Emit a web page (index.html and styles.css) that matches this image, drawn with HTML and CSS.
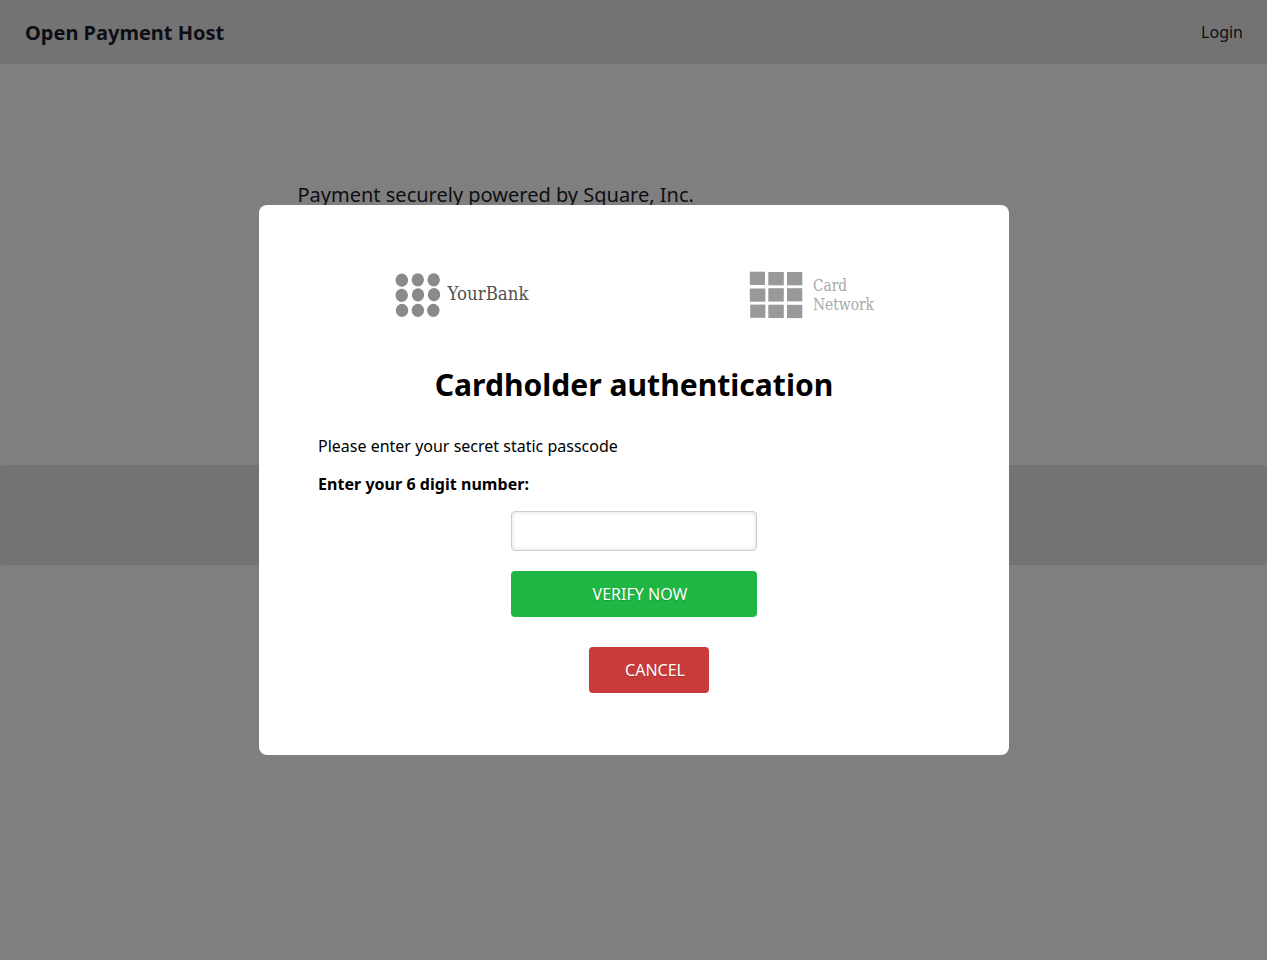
FILE: index.html
```html
<!DOCTYPE html>
<html lang="en">
<head>
<meta charset="utf-8">
<title>Open Payment Host</title>
<link rel="stylesheet" href="styles.css">
</head>
<body>
<header class="navbar">
  <a class="brand">Open Payment Host</a>
  <a class="login">Login</a>
</header>
<main class="page">
  <p class="powered">Payment securely powered by Square, Inc.</p>
</main>
<footer class="footer"></footer>
<div class="overlay">
  <section class="dialog">
    <div class="logos">
      <svg class="logo" width="150" height="60" viewBox="0 0 150 60" fill="#8a8a8a">
        <g>
          <ellipse cx="11.8" cy="15.2" rx="6.2" ry="6.6"/><ellipse cx="27.8" cy="14.8" rx="6.2" ry="6.6"/><ellipse cx="43.7" cy="14.8" rx="6.2" ry="6.6"/>
          <ellipse cx="11.7" cy="30.3" rx="6.2" ry="6.6"/><ellipse cx="28" cy="29.8" rx="6.2" ry="6.6"/><ellipse cx="44" cy="29.7" rx="6.2" ry="6.6"/>
          <ellipse cx="12" cy="45.4" rx="6.2" ry="6.6"/><ellipse cx="27.9" cy="45.3" rx="6.2" ry="6.6"/><ellipse cx="43.3" cy="45.3" rx="6.2" ry="6.6"/>
        </g>
        <text class="bank-name" x="57.5" y="35.4" textLength="81" lengthAdjust="spacingAndGlyphs">YourBank</text>
      </svg>
      <svg class="logo" width="150" height="60" viewBox="0 0 150 60" fill="#999">
        <g>
          <rect x="9.8" y="6.7" width="15.2" height="13.3"/><rect x="28.3" y="7" width="15.5" height="13.3"/><rect x="47" y="7" width="15.3" height="13.3"/>
          <rect x="9.8" y="23.5" width="15.5" height="13.2"/><rect x="28.3" y="23.2" width="15.5" height="13.4"/><rect x="47" y="23.2" width="15.3" height="13.2"/>
          <rect x="10.2" y="39.6" width="15.2" height="13.2"/><rect x="28.3" y="39.7" width="15.5" height="13.3"/><rect x="47" y="39.8" width="15.3" height="13.3"/>
        </g>
        <text class="network-name" x="73" y="26.3" textLength="34" lengthAdjust="spacingAndGlyphs">Card</text>
        <text class="network-name" x="73" y="45" textLength="61" lengthAdjust="spacingAndGlyphs">Network</text>
      </svg>
    </div>
    <h1 class="title">Cardholder authentication</h1>
    <p class="hint">Please enter your secret static passcode</p>
    <label class="label" for="code">Enter your 6 digit number:</label>
    <input class="code" id="code" type="text">
    <button class="btn verify">VERIFY NOW</button>
    <button class="btn cancel">CANCEL</button>
  </section>
</div>
</body>
</html>
```
FILE: styles.css
```css
* { box-sizing: border-box; }
html, body { height: 100%; }
body {
  margin: 0;
  overflow: hidden;
  background: #fff;
  color: #1b1d2b;
  font-family: "Noto Sans", sans-serif;
  font-size: 16px;
  line-height: 24px;
}
.navbar {
  display: flex;
  align-items: center;
  justify-content: space-between;
  height: 64px;
  padding: 0 24px 0 25px;
  background: #e6e6e6;
}
.brand { padding-top: 1px; font-size: 20px; font-weight: 700; line-height: 28px; }
.page { height: 401px; padding: 117px 0 0 297.5px; }
.powered { margin: 0; font-size: 20px; line-height: 28px; }
.footer { height: 100px; border-radius: 4px; background: #e6e6e6; }
.overlay {
  position: fixed;
  inset: 0;
  display: flex;
  align-items: center;
  justify-content: center;
  padding-left: 1px;
  background: rgba(0, 0, 0, .5);
}
.dialog {
  display: flex;
  flex-direction: column;
  width: 750px;
  height: 550px;
  padding: 60px 59px;
  border-radius: 8px;
  background: #fff;
  color: #000;
}
.logos { display: flex; gap: 200px; padding-left: 72px; }
.logo { display: block; }
.bank-name { font-family: "DejaVu Serif", serif; font-size: 17.9px; fill: #505050; }
.network-name { font-family: "DejaVu Serif", serif; font-size: 16.8px; fill: #a8a8a8; }
.title { margin: 38px 0 0; font-size: 30.1px; line-height: 44px; font-weight: 700; text-align: center; }
.hint { margin: 27px 0 14px; }
.label { font-weight: 700; letter-spacing: .04px; }
.code {
  width: 246px;
  height: 40px;
  margin: 15px 0 20px;
  align-self: center;
  border: 1px solid #ccc;
  border-radius: 4px;
  box-shadow: inset 0 0 5px #ddd;
  font: inherit;
}
.btn {
  height: 46px;
  border: 0;
  border-radius: 4px;
  color: #fff;
  font: inherit;
  text-shadow: 0 1px 1px rgba(0, 0, 0, .2);
}
.verify { align-self: center; width: 246px; padding: 0 0 0 12px; background: #1eb743; }
.cancel { width: 120px; margin: 30px 0 0 271px; padding: 0 0 0 12px; background: #c93a3a; }
```
